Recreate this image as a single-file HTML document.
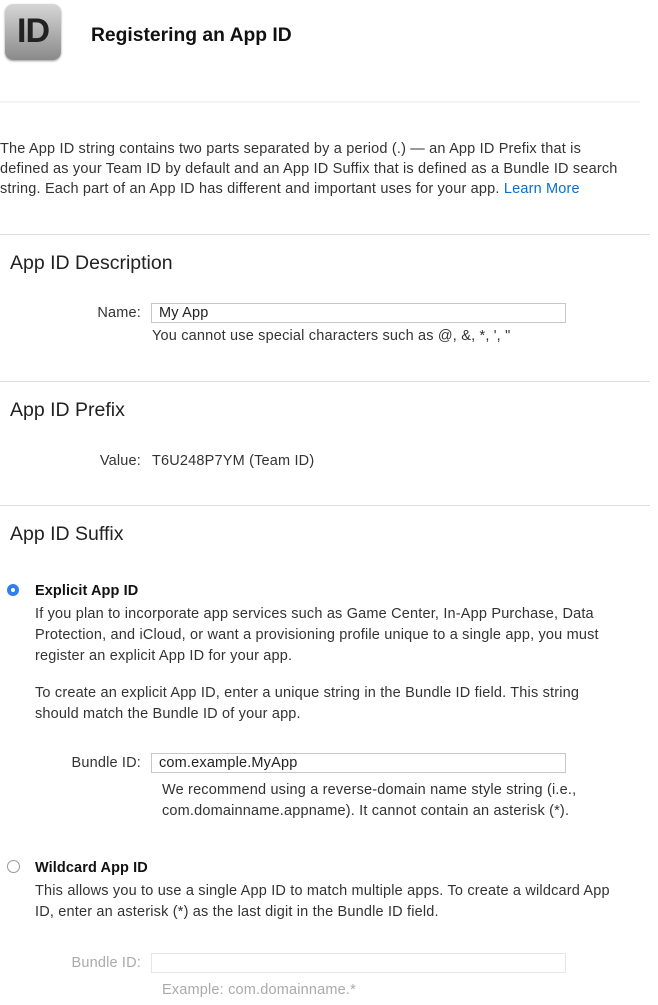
<!DOCTYPE html>
<html><head><style>
body{margin:0;width:658px;height:1005px;background:#fff;font-family:"Liberation Sans",sans-serif;color:#333;position:relative;overflow:hidden}
.a{position:absolute;white-space:nowrap;font-size:14.5px;letter-spacing:0.18px;line-height:21px;margin-top:1px}
.h{position:absolute;font-size:19.5px;color:#222;white-space:nowrap}
.hr{position:absolute;left:0;width:650px;height:1px;background:#ddd}
.in{position:absolute;border:1px solid #c8c8c8;height:20px;background:#fff;font-size:14.5px;letter-spacing:0.18px;line-height:19px;padding-left:7px;box-sizing:border-box;color:#222}
.lbl{position:absolute;font-size:14.5px;letter-spacing:0.18px;text-align:right;white-space:nowrap;line-height:21px;margin-top:1px}
</style></head><body>
<div style="position:absolute;left:5px;top:4px;width:56px;height:56px;border-radius:8px;background:linear-gradient(#d6d6d6,#8a8a8a);box-shadow:0 1px 2px #999"><div style="position:absolute;left:0;top:8px;width:56px;text-align:center;font-size:34px;font-weight:bold;color:#222;letter-spacing:-1px">ID</div></div>
<div style="position:absolute;left:91px;top:25px;font-size:19.3px;font-weight:bold;color:#111">Registering an App ID</div>
<div style="position:absolute;left:0;top:101px;width:640px;height:3px;background:linear-gradient(#eee,#fff)"></div>
<div class="a" style="left:0;top:138px">The App ID string contains two parts separated by a period (.) — an App ID Prefix that is</div>
<div class="a" style="left:0;top:158px">defined as your Team ID by default and an App ID Suffix that is defined as a Bundle ID search</div>
<div class="a" style="left:0;top:178px">string. Each part of an App ID has different and important uses for your app. <span style="color:#0a6fcc">Learn More</span></div>
<div class="hr" style="top:234px"></div>
<div class="h" style="left:10px;top:252px">App ID Description</div>
<div class="lbl" style="right:517px;top:302px">Name:</div>
<div class="in" style="left:151px;top:303px;width:415px">My App</div>
<div class="a" style="left:152px;top:325px">You cannot use special characters such as @, &amp;, *, ', "</div>
<div class="hr" style="top:381px"></div>
<div class="h" style="left:10px;top:399px">App ID Prefix</div>
<div class="lbl" style="right:517px;top:450px">Value:</div>
<div class="a" style="left:152px;top:450px">T6U248P7YM (Team ID)</div>
<div class="hr" style="top:505px"></div>
<div class="h" style="left:10px;top:523px">App ID Suffix</div>
<div style="position:absolute;left:7px;top:584px;width:12px;height:12px;border-radius:50%;background:#2f7fef"><div style="position:absolute;left:4px;top:4px;width:4px;height:4px;border-radius:50%;background:#fff"></div></div>
<div class="a" style="left:35px;top:580px;font-weight:bold;color:#111;letter-spacing:0.1px">Explicit App ID</div>
<div class="a" style="left:35px;top:603px">If you plan to incorporate app services such as Game Center, In-App Purchase, Data</div>
<div class="a" style="left:35px;top:624px">Protection, and iCloud, or want a provisioning profile unique to a single app, you must</div>
<div class="a" style="left:35px;top:645px">register an explicit App ID for your app.</div>
<div class="a" style="left:35px;top:682px">To create an explicit App ID, enter a unique string in the Bundle ID field. This string</div>
<div class="a" style="left:35px;top:703px">should match the Bundle ID of your app.</div>
<div class="lbl" style="right:517px;top:752px">Bundle ID:</div>
<div class="in" style="left:151px;top:753px;width:415px">com.example.MyApp</div>
<div class="a" style="left:162px;top:779px">We recommend using a reverse-domain name style string (i.e.,</div>
<div class="a" style="left:162px;top:800px">com.domainname.appname). It cannot contain an asterisk (*).</div>
<div style="position:absolute;left:7px;top:860px;width:11px;height:11px;border-radius:50%;border:1px solid #999;background:#fff"></div>
<div class="a" style="left:35px;top:857px;font-weight:bold;color:#111;letter-spacing:0.1px">Wildcard App ID</div>
<div class="a" style="left:35px;top:880px">This allows you to use a single App ID to match multiple apps. To create a wildcard App</div>
<div class="a" style="left:35px;top:901px">ID, enter an asterisk (*) as the last digit in the Bundle ID field.</div>
<div class="lbl" style="right:517px;top:952px;color:#aaa">Bundle ID:</div>
<div class="in" style="left:151px;top:953px;width:415px;border-color:#e6e6e6"></div>
<div class="a" style="left:162px;top:979px;color:#aaa">Example: com.domainname.*</div>
</body></html>
